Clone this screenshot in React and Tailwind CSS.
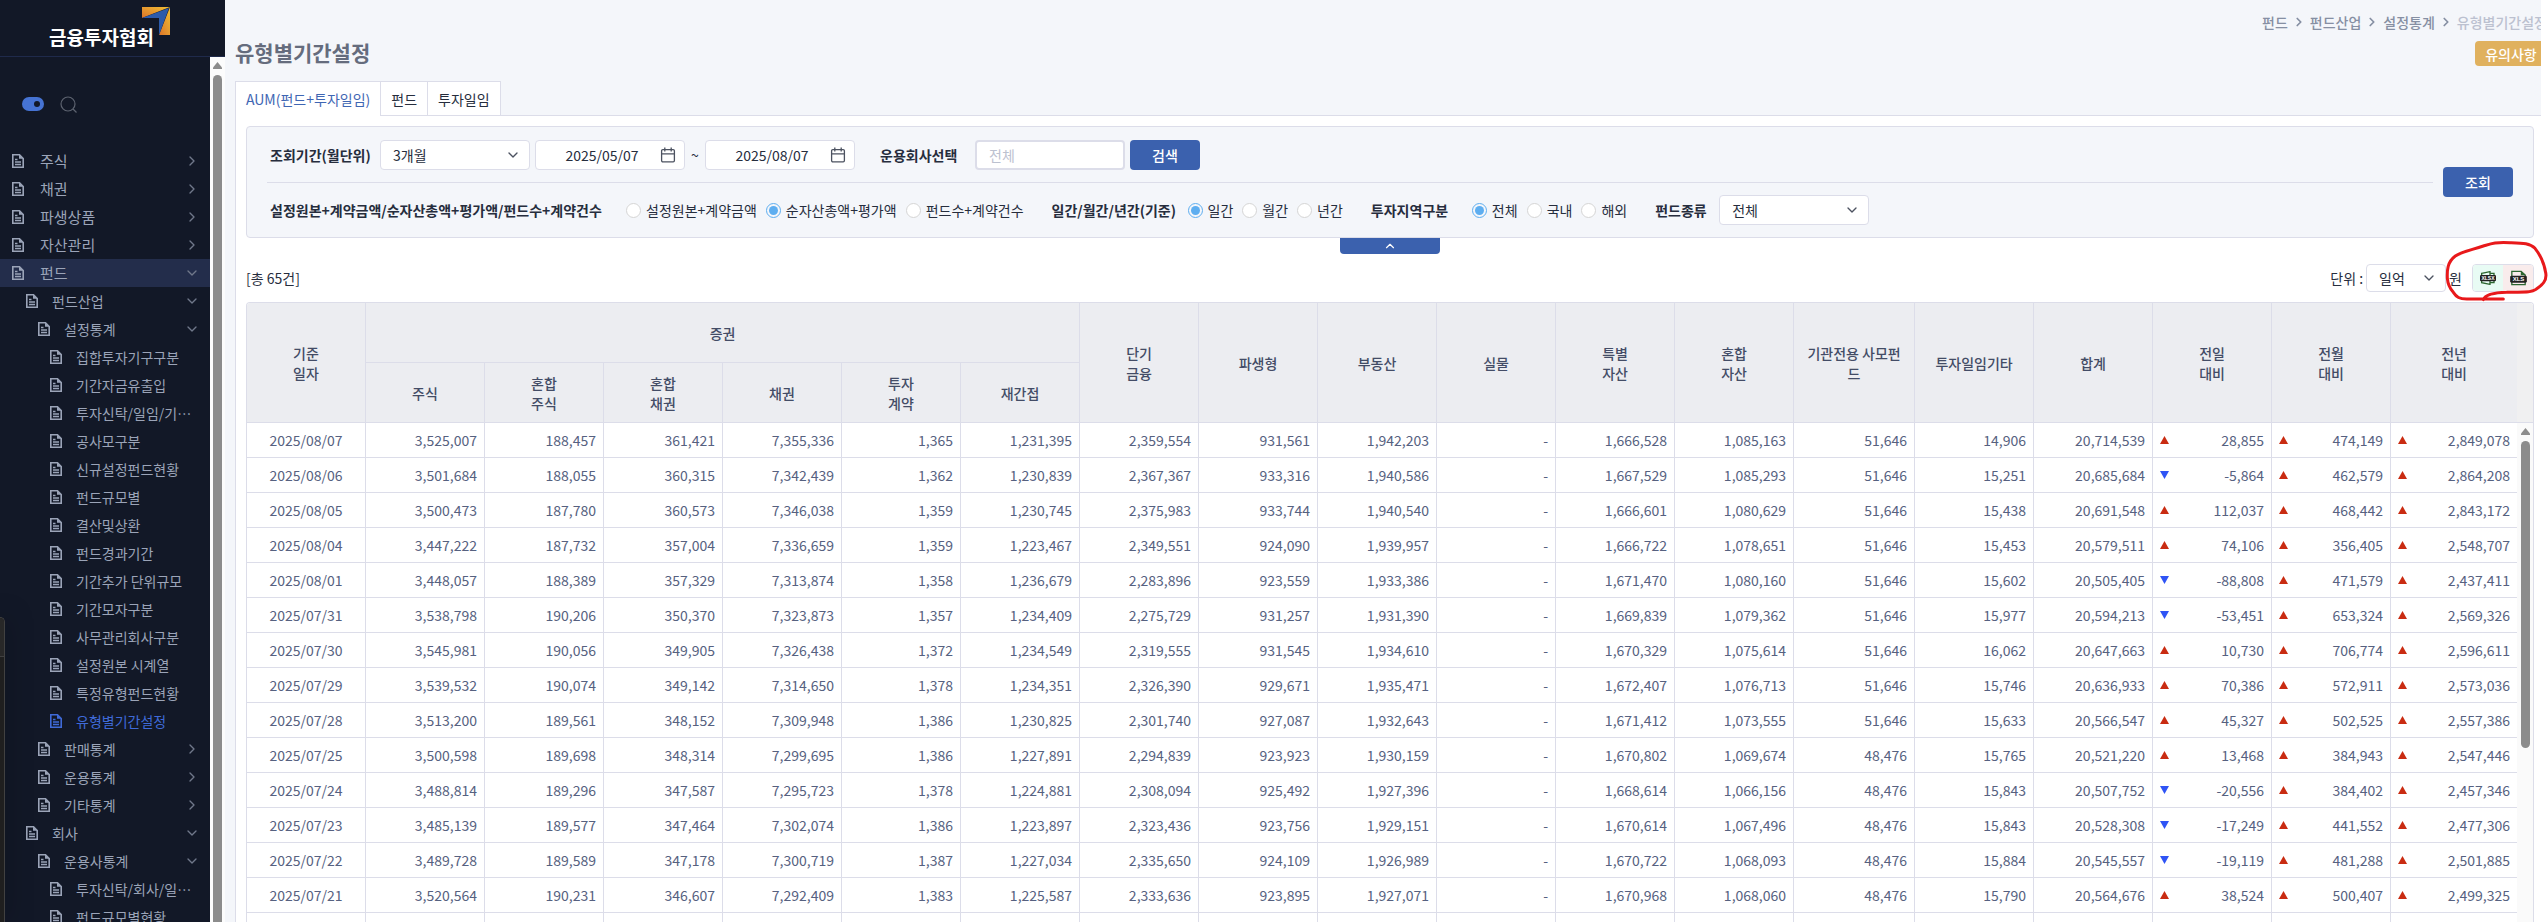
import { useState } from 'react';
import { FiChevronDown, FiChevronRight, FiChevronUp } from 'react-icons/fi';

const menu = [
  { label: '주식', level: 1, icon: 'right' },
  { label: '채권', level: 1, icon: 'right' },
  { label: '파생상품', level: 1, icon: 'right' },
  { label: '자산관리', level: 1, icon: 'right' },
  { label: '펀드', level: 1, icon: 'down', open: true },
  { label: '펀드산업', level: 2, icon: 'down' },
  { label: '설정통계', level: 3, icon: 'down' },
  { label: '집합투자기구구분', level: 4 },
  { label: '기간자금유출입', level: 4 },
  { label: '투자신탁/일임/기⋯', level: 4 },
  { label: '공사모구분', level: 4 },
  { label: '신규설정펀드현황', level: 4 },
  { label: '펀드규모별', level: 4 },
  { label: '결산및상환', level: 4 },
  { label: '펀드경과기간', level: 4 },
  { label: '기간추가 단위규모', level: 4 },
  { label: '기간모자구분', level: 4 },
  { label: '사무관리회사구분', level: 4 },
  { label: '설정원본 시계열', level: 4 },
  { label: '특정유형펀드현황', level: 4 },
  { label: '유형별기간설정', level: 4, active: true },
  { label: '판매통계', level: 3, icon: 'right' },
  { label: '운용통계', level: 3, icon: 'right' },
  { label: '기타통계', level: 3, icon: 'right' },
  { label: '회사', level: 2, icon: 'down' },
  { label: '운용사통계', level: 3, icon: 'down' },
  { label: '투자신탁/회사/일⋯', level: 4 },
  { label: '펀드규모별현황', level: 4 },
];

const levelStyles = {
  1: 'pl-3 gap-4 text-[15px]',
  2: 'pl-[26px] gap-[14px] text-sm',
  3: 'pl-[38px] gap-[14px] text-sm',
  4: 'pl-[50px] gap-[14px] text-sm',
};

// 기준일자, 증권(6), 단기금융 ~ 합계(9), 전일/전월/전년 대비
const rows = [
  ['2025/08/07', '3,525,007', '188,457', '361,421', '7,355,336', '1,365', '1,231,395', '2,359,554', '931,561', '1,942,203', '-', '1,666,528', '1,085,163', '51,646', '14,906', '20,714,539', '28,855', '474,149', '2,849,078'],
  ['2025/08/06', '3,501,684', '188,055', '360,315', '7,342,439', '1,362', '1,230,839', '2,367,367', '933,316', '1,940,586', '-', '1,667,529', '1,085,293', '51,646', '15,251', '20,685,684', '-5,864', '462,579', '2,864,208'],
  ['2025/08/05', '3,500,473', '187,780', '360,573', '7,346,038', '1,359', '1,230,745', '2,375,983', '933,744', '1,940,540', '-', '1,666,601', '1,080,629', '51,646', '15,438', '20,691,548', '112,037', '468,442', '2,843,172'],
  ['2025/08/04', '3,447,222', '187,732', '357,004', '7,336,659', '1,359', '1,223,467', '2,349,551', '924,090', '1,939,957', '-', '1,666,722', '1,078,651', '51,646', '15,453', '20,579,511', '74,106', '356,405', '2,548,707'],
  ['2025/08/01', '3,448,057', '188,389', '357,329', '7,313,874', '1,358', '1,236,679', '2,283,896', '923,559', '1,933,386', '-', '1,671,470', '1,080,160', '51,646', '15,602', '20,505,405', '-88,808', '471,579', '2,437,411'],
  ['2025/07/31', '3,538,798', '190,206', '350,370', '7,323,873', '1,357', '1,234,409', '2,275,729', '931,257', '1,931,390', '-', '1,669,839', '1,079,362', '51,646', '15,977', '20,594,213', '-53,451', '653,324', '2,569,326'],
  ['2025/07/30', '3,545,981', '190,056', '349,905', '7,326,438', '1,372', '1,234,549', '2,319,555', '931,545', '1,934,610', '-', '1,670,329', '1,075,614', '51,646', '16,062', '20,647,663', '10,730', '706,774', '2,596,611'],
  ['2025/07/29', '3,539,532', '190,074', '349,142', '7,314,650', '1,378', '1,234,351', '2,326,390', '929,671', '1,935,471', '-', '1,672,407', '1,076,713', '51,646', '15,746', '20,636,933', '70,386', '572,911', '2,573,036'],
  ['2025/07/28', '3,513,200', '189,561', '348,152', '7,309,948', '1,386', '1,230,825', '2,301,740', '927,087', '1,932,643', '-', '1,671,412', '1,073,555', '51,646', '15,633', '20,566,547', '45,327', '502,525', '2,557,386'],
  ['2025/07/25', '3,500,598', '189,698', '348,314', '7,299,695', '1,386', '1,227,891', '2,294,839', '923,923', '1,930,159', '-', '1,670,802', '1,069,674', '48,476', '15,765', '20,521,220', '13,468', '384,943', '2,547,446'],
  ['2025/07/24', '3,488,814', '189,296', '347,587', '7,295,723', '1,378', '1,224,881', '2,308,094', '925,492', '1,927,396', '-', '1,668,614', '1,066,156', '48,476', '15,843', '20,507,752', '-20,556', '384,402', '2,457,346'],
  ['2025/07/23', '3,485,139', '189,577', '347,464', '7,302,074', '1,386', '1,223,897', '2,323,436', '923,756', '1,929,151', '-', '1,670,614', '1,067,496', '48,476', '15,843', '20,528,308', '-17,249', '441,552', '2,477,306'],
  ['2025/07/22', '3,489,728', '189,589', '347,178', '7,300,719', '1,387', '1,227,034', '2,335,650', '924,109', '1,926,989', '-', '1,670,722', '1,068,093', '48,476', '15,884', '20,545,557', '-19,119', '481,288', '2,501,885'],
  ['2025/07/21', '3,520,564', '190,231', '346,607', '7,292,409', '1,383', '1,225,587', '2,333,636', '923,895', '1,927,071', '-', '1,670,968', '1,068,060', '48,476', '15,790', '20,564,676', '38,524', '500,407', '2,499,325'],
  Array(19).fill(''),
];

const subHeads = [['주식'], ['혼합', '주식'], ['혼합', '채권'], ['채권'], ['투자', '계약'], ['재간접']];
const heads = [
  ['단기', '금융'],
  ['파생형'],
  ['부동산'],
  ['실물'],
  ['특별', '자산'],
  ['혼합', '자산'],
  ['기관전용 사모펀', '드'],
  ['투자일임기타'],
  ['합계'],
  ['전일', '대비'],
  ['전월', '대비'],
  ['전년', '대비'],
];

const FileIcon = () => (
  <svg className="w-3 h-[14px] shrink-0" viewBox="0 0 12 14" fill="none" stroke="currentColor">
    <path d="M.8.8h6.7l3.7 3.7v8.7H.8z" strokeWidth="1.6" />
    <path d="M7 .5v4.3h4.5z" fill="currentColor" stroke="none" />
    <path d="M3 5.5h2.5M3 8h6M3 10.5h6" strokeWidth="1.3" />
  </svg>
);

const CalendarIcon = () => (
  <svg className="w-4 h-4" viewBox="0 0 16 16" fill="none" stroke="#4c5260" strokeWidth="1.3">
    <rect x="1.6" y="2.6" width="12.8" height="12.2" rx="1.2" />
    <path d="M1.6 6.8h12.8M4.8.6v4M11.2.6v4" />
  </svg>
);

const Logo = () => (
  <svg className="w-7 h-7" viewBox="0 0 28 28">
    <defs>
      <linearGradient id="mark-top" x1="0" y1="1" x2="1" y2="0">
        <stop offset="0" stopColor="#dc7429" />
        <stop offset="1" stopColor="#f0bf35" />
      </linearGradient>
      <linearGradient id="mark-side" x1="0" y1="1" x2="1" y2="0">
        <stop offset="0" stopColor="#dc7429" />
        <stop offset="1" stopColor="#f0bf35" />
      </linearGradient>
    </defs>
    <path d="M0 0h28L0 11z" fill="url(#mark-top)" />
    <path d="M28 0v28H17z" fill="url(#mark-side)" />
    <path d="M0 11 27 1 17 28V11z" fill="#2c5bab" />
  </svg>
);

const ArrowUp = () => (
  <svg className="w-[9px] h-[7px] shrink-0" viewBox="0 0 9 7">
    <path d="M4.5 0 9 5.5V7H0V5.5z" fill="#8c8c8c" />
  </svg>
);

const XlsxIcon = () => (
  <svg className="w-4 h-[14px]" viewBox="0 0 48 42" aria-label="XLSX">
    <path d="M5 7 30 2v38L5 35z" fill="none" stroke="#2c6630" strokeWidth="4" />
    <path d="M30 7h12v28H30" fill="none" stroke="#2c6630" strokeWidth="4" />
    <rect y="12" width="48" height="19" rx="4" fill="#222" />
    <text x="24" y="27" textAnchor="middle" fontSize="15" fontWeight="700" fill="#fff" fontFamily="Liberation Sans, sans-serif">XLSX</text>
  </svg>
);

const XlsIcon = () => (
  <svg className="w-[17px] h-4" viewBox="0 0 50 48" aria-label="XLS">
    <path d="M5 44V4h28l12 11v29z" fill="none" stroke="#2c6630" strokeWidth="4" />
    <path d="M32 3v13h14z" fill="#2c6630" />
    <rect y="17" width="50" height="21" rx="4" fill="#222" />
    <text x="25" y="34" textAnchor="middle" fontSize="18" fontWeight="700" fill="#fff" fontFamily="Liberation Sans, sans-serif">XLS</text>
  </svg>
);

const SelectBox = ({ id, options, className }) => (
  <div className={`relative shrink-0 ${className}`}>
    <select
      id={id}
      className="w-full h-full pl-3 pr-8 appearance-none rounded border border-[#dcdde9] bg-white"
    >
      {options.map((o) => (
        <option key={o}>{o}</option>
      ))}
    </select>
    <FiChevronDown className="absolute right-[9px] top-1/2 -translate-y-1/2 text-base text-[#4c5260] pointer-events-none" />
  </div>
);

const DateBox = ({ label, value }) => (
  <div className="flex items-center w-[150px] h-[30px] pr-2 rounded border border-[#dcdde9] bg-white">
    <input aria-label={label} defaultValue={value} className="w-full min-w-0 pl-2 text-center outline-none" />
    <button type="button" aria-label={`${label} 달력`}>
      <CalendarIcon />
    </button>
  </div>
);

const RadioGroup = ({ name, options, initial }) => {
  const [value, setValue] = useState(initial);
  return (
    <div className="flex items-center gap-[9px] whitespace-nowrap">
      {options.map((o) => (
        <label key={o} className="flex items-center gap-[5px]">
          <input
            type="radio"
            name={name}
            checked={value === o}
            onChange={() => setValue(o)}
            className="appearance-none w-[15px] h-[15px] rounded-full border border-[#d5d5d5] bg-white checked:border-[#5eaef0] checked:bg-[#5eaef0] checked:bg-clip-content checked:p-[2px]"
          />
          {o}
        </label>
      ))}
    </div>
  );
};

const Sidebar = () => (
  <aside className="relative flex flex-col w-[225px] shrink-0 bg-[#121827]">
    <div className="flex h-[57px] pl-[49px] pt-[7px] border-b border-[#1f2a4b] shrink-0">
      <a href="#" className="flex">
        <span className="mt-4 -mr-3 text-[19px] leading-7 font-bold text-white whitespace-nowrap">금융투자협회</span>
        <Logo />
      </a>
    </div>
    <div className="flex flex-1 min-h-0">
      <nav className="w-[210px] overflow-hidden">
        <div className="flex items-center gap-4 h-[90px] pl-[22px] pt-1">
          <button
            type="button"
            aria-label="테마"
            className="flex items-center justify-end w-[22px] h-[14px] pr-1 rounded-full bg-[#4673d3]"
          >
            <span className="w-[6px] h-[6px] rounded-full bg-[#121827]" />
          </button>
          <button type="button" aria-label="검색어 입력">
            <svg className="w-[17px] h-[17px] text-[#5d6370]" viewBox="0 0 17 17" fill="none" stroke="currentColor" strokeWidth="1.2">
              <circle cx="8" cy="8" r="7" />
              <path d="m13 13 3.5 3.5" />
            </svg>
          </button>
        </div>
        <ul>
          {menu.map((m, i) => (
            <li key={i}>
              <a
                href="#"
                className={`flex items-center h-7 pr-[10px] whitespace-nowrap ${levelStyles[m.level]} ${
                  m.active ? 'text-[#3f6ad8]' : 'text-[#9ba4b8]'
                } ${m.open ? 'bg-[#232d4b]' : ''}`}
              >
                <FileIcon />
                <span className="flex-1">{m.label}</span>
                {m.icon === 'right' && <FiChevronRight className="text-base text-[#70788a]" />}
                {m.icon === 'down' && <FiChevronDown className="text-base text-[#70788a]" />}
              </a>
            </li>
          ))}
        </ul>
      </nav>
      <div className="flex flex-col items-center flex-1 pt-[5px] bg-[#fcfcfc]">
        <ArrowUp />
        <div className="flex-1 w-[9px] mt-[6px] rounded-t-full bg-[#8c8c8c]" />
      </div>
    </div>

    {/* Edge of a window that sits over the sidebar */}
    <div className="absolute left-0 top-[617px] bottom-0 w-[5px] overflow-hidden rounded-tr-md border-t border-r border-[#414141] bg-[#1f1f1f] shadow-[0_0_24px_rgba(0,0,0,0.5)]">
      <div className="h-[39px] border-b border-[#414141] bg-[#282828]" />
    </div>
  </aside>
);

const SearchPanel = () => (
  <form className="flex items-center pl-5 pr-5 rounded border border-[#dcdde9] bg-[#f4f6fa]" onSubmit={(e) => e.preventDefault()}>
    <div className="flex-1 min-w-0">
      <div className="flex items-center h-14 pl-[3px] border-b border-[#dcdde9]">
        <label htmlFor="period" className="w-[110px] font-bold">조회기간(월단위)</label>
        <SelectBox id="period" options={['3개월', '6개월', '1년']} className="w-[150px] h-[30px] mr-[5px]" />
        <DateBox label="시작일" value="2025/05/07" />
        <span className="w-5 text-center">~</span>
        <DateBox label="종료일" value="2025/08/07" />
        <label htmlFor="company" className="w-[95px] ml-[25px] font-bold">운용회사선택</label>
        <input
          id="company"
          placeholder="전체"
          className="w-[150px] h-[30px] px-3 rounded border-2 border-[#dcdde9] bg-white placeholder:text-[#bcc1d0]"
        />
        <button type="button" className="w-[70px] h-[30px] ml-[5px] rounded bg-[#3b61ae] font-medium text-white">검색</button>
      </div>
      <div className="flex items-center h-[54px] pl-[3px] whitespace-nowrap">
        <span className="w-[356px] font-bold">설정원본+계약금액/순자산총액+평가액/펀드수+계약건수</span>
        <RadioGroup name="basis" options={['설정원본+계약금액', '순자산총액+평가액', '펀드수+계약건수']} initial="순자산총액+평가액" />
        <span className="w-[136px] ml-7 font-bold">일간/월간/년간(기준)</span>
        <RadioGroup name="unit" options={['일간', '월간', '년간']} initial="일간" />
        <span className="w-[101px] ml-7 font-bold">투자지역구분</span>
        <RadioGroup name="region" options={['전체', '국내', '해외']} initial="전체" />
        <label htmlFor="kind" className="w-16 ml-7 font-bold">펀드종류</label>
        <SelectBox id="kind" options={['전체', '공모', '사모']} className="w-[150px] h-[30px]" />
      </div>
    </div>
    <button type="submit" className="w-[70px] h-[30px] ml-[10px] rounded bg-[#3b61ae] font-medium text-white">조회</button>
  </form>
);

const HeadCell = ({ lines, ...rest }) => (
  <th className="border-r border-b border-[#dcdde9] font-medium" {...rest}>
    {lines.map((line) => (
      <span key={line} className="block whitespace-nowrap">{line}</span>
    ))}
  </th>
);

const FundTable = () => (
  <div className="flex flex-1 min-h-0 overflow-hidden rounded-t border-t border-x border-[#dcdde9]">
    <div className="flex-1 min-w-0 overflow-hidden">
      <table className="w-full table-fixed border-separate border-spacing-0 leading-5 text-[#566180]">
        <colgroup>
          {rows[0].map((_, i) => (
            <col key={i} className={i === 13 ? 'w-[121px]' : i === 18 ? 'w-[127px]' : 'w-[119px]'} />
          ))}
        </colgroup>
        <thead className="bg-[#ecedf1] text-[#434c66]">
          <tr className="h-[60px]">
            <HeadCell lines={['기준', '일자']} rowSpan={2} />
            <HeadCell lines={['증권']} colSpan={6} />
            {heads.map((h, i) => (
              <HeadCell key={i} lines={h} rowSpan={2} />
            ))}
          </tr>
          <tr className="h-[60px]">
            {subHeads.map((h, i) => (
              <HeadCell key={i} lines={h} />
            ))}
          </tr>
        </thead>
        <tbody>
          {rows.map((row, r) => (
            <tr key={r} className="h-[35px]">
              {row.map((cell, i) => (
                <td
                  key={i}
                  className={`px-[7px] border-r border-b border-[#dcdde9] ${i === 0 ? 'text-center' : 'text-right'}`}
                >
                  {i > 15 && cell ? (
                    <div className="flex items-center justify-between">
                      <svg className="w-[9px] h-2" viewBox="0 0 9 8">
                        {cell.startsWith('-') ? (
                          <path d="M0 0h9L4.5 8z" fill="#2f54f5" />
                        ) : (
                          <path d="M0 8h9L4.5 0z" fill="#c92c12" />
                        )}
                      </svg>
                      {cell}
                    </div>
                  ) : (
                    cell
                  )}
                </td>
              ))}
            </tr>
          ))}
        </tbody>
      </table>
    </div>
    <div className="flex flex-col items-center w-4 bg-[#fafafa]">
      <div className="w-full h-[120px] shrink-0 border-b border-[#dcdde9] bg-[#f0f0f1]" />
      <div className="mt-[5px] flex"><ArrowUp /></div>
      <div className="w-[9px] h-[307px] mt-[6px] shrink-0 rounded-full bg-[#8c8c8c]" />
    </div>
  </div>
);

const Breadcrumb = () => (
  <nav className="flex items-center gap-1 h-5 font-medium text-[#868fa3]">
    {['펀드', '펀드산업', '설정통계'].map((c) => (
      <span key={c} className="flex items-center gap-1">
        <a href="#">{c}</a>
        <FiChevronRight className="text-sm stroke-[3]" />
      </span>
    ))}
    <span className="text-[#bcc1d0]">유형별기간설정</span>
  </nav>
);

const App = () => {
  const tabs = ['AUM(펀드+투자일임)', '펀드', '투자일임'];
  const [tab, setTab] = useState(tabs[0]);

  return (
    <div className="flex h-screen overflow-hidden bg-white text-sm text-[#262d3d] font-['Noto_Sans_CJK_KR','Noto_Sans',sans-serif]">
      <Sidebar />
      <main className="relative flex-1 min-w-0 pr-[7px]">
        <div className="flex flex-col h-full pl-[10px] overflow-hidden bg-[#f4f6fa]">
          <div className="flex justify-between h-[81px] shrink-0">
            <h1 className="pt-9 text-[21px] leading-8 font-bold text-[#656c7d]">유형별기간설정</h1>
            <div className="flex flex-col items-end gap-[9px] pt-3 -mr-[6px] whitespace-nowrap">
              <Breadcrumb />
              <button type="button" className="w-[72px] h-[25px] rounded bg-[#e0b15e] font-medium text-white">유의사항</button>
            </div>
          </div>

          <div className="flex h-[35px] shrink-0" role="tablist">
            {tabs.map((t) => (
              <button
                key={t}
                type="button"
                role="tab"
                aria-selected={t === tab}
                onClick={() => setTab(t)}
                className={`px-[10px] border-l border-t border-[#dcdde9] bg-white whitespace-nowrap ${
                  t === tab ? 'text-[#3f66b3]' : 'border-b'
                }`}
              >
                {t}
              </button>
            ))}
            <div className="flex-1 border-l border-b border-[#dcdde9]" />
          </div>

          <div className="flex flex-col flex-1 min-h-0 pt-[10px] pl-[10px] pr-[7px] border-l border-[#dcdde9] bg-white">
            <SearchPanel />
            <button
              type="button"
              aria-label="검색조건 접기"
              className="flex items-center justify-center w-[100px] h-4 mx-auto rounded-b bg-[#3b61ae] text-white shrink-0"
            >
              <FiChevronUp className="text-sm" />
            </button>

            <div className="flex items-center justify-between h-7 my-[10px] shrink-0">
              <span>[총 65건]</span>
              <div className="flex items-center">
                <label htmlFor="won" className="mr-[3px]">단위 :</label>
                <SelectBox id="won" options={['일억', '백만', '천']} className="w-20 h-7" />
                <span className="ml-[3px] mr-[10px]">원</span>
                <div className="flex w-[62px] h-7 overflow-hidden rounded border border-[#dcdde9]">
                  <button type="button" className="flex items-center justify-center flex-1 bg-[#e8fbf4]">
                    <XlsxIcon />
                  </button>
                  <button type="button" className="flex items-center justify-center flex-1 bg-[#f9ecec]">
                    <XlsIcon />
                  </button>
                </div>
              </div>
            </div>

            <FundTable />
          </div>
        </div>

        {/* Hand-drawn mark round the download buttons */}
        <svg
          className="absolute right-0 top-[236px] w-[108px] h-[70px] pointer-events-none"
          viewBox="720 708 324 210"
          fill="none"
          stroke="#e8191b"
          strokeWidth="9"
          strokeLinecap="round"
          strokeLinejoin="round"
        >
          <path d="M850 899C856 884 880 878 920 877C960 875 992 880 1008 868C1026 856 1042 842 1037 818C1032 785 1020 764 1005 745C990 729 968 729 930 728C885 726 876 730 850 738C815 750 785 755 766 768C742 786 741 810 742 835C744 858 752 868 760 877C770 892 778 897 800 897L910 897" />
        </svg>
      </main>
    </div>
  );
};

export default App;
